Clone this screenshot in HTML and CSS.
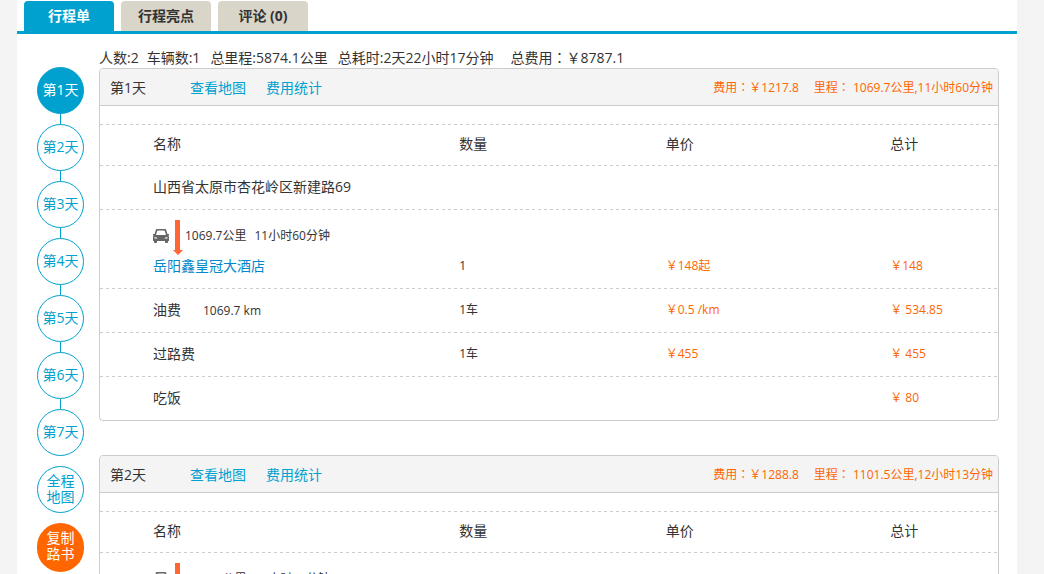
FILE: index.html
```html
<!DOCTYPE html>
<html lang="zh-CN">
<head>
<meta charset="utf-8">
<title>行程单</title>
<link rel="stylesheet" href="styles.css">
</head>
<body>
<svg class="sprite" aria-hidden="true">
  <symbol id="car" viewBox="0 0 16 14">
    <path fill="#666" fill-rule="evenodd" d="M4.500 0h7c1 0 1.600.5 1.900 1.400L14.400 5H16v1.300l-.6.3c.4.5.6 1.200.6 2V12h-1v1.200a.8.8 0 0 1-.8.800h-1.400a.8.8 0 0 1-.8-.800V12H4v1.200a.8.8 0 0 1-.8.800H1.800a.8.8 0 0 1-.8-.800V12H0V8.600c0-.8.2-1.500.6-2L0 6.300V5h1.600l1-3.600C2.900.5 3.500 0 4.500 0zM4.900 1.600c-.4 0-.6.2-.7.500L3 6h10l-1.200-3.900c-.1-.3-.3-.5-.7-.500zM1.600 8v1.500h2.600V8.800zM14.400 8l-2.600.8v.7h2.600z"/>
  </symbol>
  <symbol id="arrow" viewBox="0 0 10 36">
    <path fill="#f63" d="M2 0h5v30h3l-5 5-5-5h2z"/>
  </symbol>
</svg>
<div class="page">
  <nav class="tabs">
    <a class="tab tab-active" href="#plan">行程单</a>
    <a class="tab" href="#highlights">行程亮点</a>
    <a class="tab" href="#comments">评论 (0)</a>
  </nav>
  <div class="content" id="plan">
    <aside class="side">
      <ol class="days">
        <li><a class="dot dot-active" href="#day1">第1天</a></li>
        <li><a class="dot" href="#day2">第2天</a></li>
        <li><a class="dot" href="#day3">第3天</a></li>
        <li><a class="dot" href="#day4">第4天</a></li>
        <li><a class="dot" href="#day5">第5天</a></li>
        <li><a class="dot" href="#day6">第6天</a></li>
        <li><a class="dot" href="#day7">第7天</a></li>
      </ol>
      <a class="dot" href="#map">全程<br>地图</a>
      <button class="dot dot-copy" type="button">复制<br>路书</button>
    </aside>
    <main class="main">
      <p class="summary">
        <span class="people">人数:2</span>
        <span class="cars">车辆数:1</span>
        <span class="cars">总里程:5874.1公里</span>
        <span class="time">总耗时:2天22小时17分钟</span>
        <span>总费用<span class="colon" lang="zh-TW">：</span>￥8787.1</span>
      </p>

      <section class="day" id="day1">
        <header class="day-head">
          <h2 class="day-title">第1天</h2>
          <a class="day-link" href="#map1">查看地图</a>
          <a class="day-link" href="#cost1">费用统计</a>
          <p class="day-total">
            <span>费用<span class="colon" lang="zh-TW">：</span>￥1217.8</span>
            <span>里程<span class="colon" lang="zh-TW">：</span> 1069.7公里,11小时60分钟</span>
          </p>
        </header>
        <table class="items">
          <thead>
            <tr><th class="c-name">名称</th><th class="c-qty">数量</th><th class="c-price">单价</th><th class="c-sum">总计</th></tr>
          </thead>
          <tbody>
            <tr><td colspan="4">山西省太原市杏花岭区新建路69</td></tr>
            <tr class="stop">
              <td>
                <div class="leg">
                  <svg class="car"><use href="#car"/></svg>
                  <svg class="arrow"><use href="#arrow"/></svg>
                  <span class="leg-text"><span>1069.7公里</span><span>11小时60分钟</span></span>
                </div>
                <a class="place" href="#hotel">岳阳鑫皇冠大酒店</a>
              </td>
              <td class="num">1</td>
              <td class="money">￥148起</td>
              <td class="money">￥148</td>
            </tr>
            <tr>
              <td>油费<span class="note">1069.7 km</span></td>
              <td class="num">1车</td>
              <td class="money">￥0.5 /km</td>
              <td class="money">￥ 534.85</td>
            </tr>
            <tr>
              <td>过路费</td>
              <td class="num">1车</td>
              <td class="money">￥455</td>
              <td class="money">￥ 455</td>
            </tr>
            <tr>
              <td>吃饭</td>
              <td></td>
              <td></td>
              <td class="money">￥ 80</td>
            </tr>
          </tbody>
        </table>
      </section>

      <section class="day" id="day2">
        <header class="day-head">
          <h2 class="day-title">第2天</h2>
          <a class="day-link" href="#map2">查看地图</a>
          <a class="day-link" href="#cost2">费用统计</a>
          <p class="day-total">
            <span>费用<span class="colon" lang="zh-TW">：</span>￥1288.8</span>
            <span>里程<span class="colon" lang="zh-TW">：</span> 1101.5公里,12小时13分钟</span>
          </p>
        </header>
        <table class="items">
          <thead>
            <tr><th class="c-name">名称</th><th class="c-qty">数量</th><th class="c-price">单价</th><th class="c-sum">总计</th></tr>
          </thead>
          <tbody>
            <tr class="stop">
              <td colspan="4">
                <div class="leg">
                  <svg class="car"><use href="#car"/></svg>
                  <svg class="arrow"><use href="#arrow"/></svg>
                  <span class="leg-text"><span>1101.5公里</span><span>12小时13分钟</span></span>
                </div>
              </td>
            </tr>
          </tbody>
        </table>
      </section>
    </main>
  </div>
</div>
</body>
</html>
```

FILE: styles.css
```css
* {
  box-sizing: border-box;
}

body {
  margin: 0;
  padding: 0 27px 0 17px;
  background: #f4f4f4;
  color: #333;
  font: 14px/20px "Open Sans", "Noto Sans CJK SC", sans-serif;
  text-spacing-trim: space-all;
}

a {
  color: #00a1cf;
  text-decoration: none;
}

h2,
p,
ol {
  margin: 0;
  padding: 0;
  font-size: 14px;
  font-weight: 400;
}

.sprite {
  display: none;
}

.colon {
  font-family: "Noto Sans CJK TC", sans-serif;
  line-height: 1;
}

.page {
  min-height: 100vh;
  background: #fff;
}

/* Tabs */
.tabs {
  display: flex;
  gap: 7px;
  padding: 1px 7px 0;
  border-bottom: 3px solid #00a1cf;
}

.tab {
  width: 90px;
  height: 30px;
  border-radius: 4px 4px 0 0;
  background: #d9d5c9;
  color: #333;
  font-weight: 700;
  line-height: 30px;
  text-align: center;
}

.tab-active {
  background: #00a1cf;
  color: #fff;
}

.content {
  display: flex;
  gap: 15px;
  padding: 0 18px 0 20px;
}

/* Day navigation */
.side {
  display: flex;
  flex: none;
  flex-direction: column;
  gap: 10px;
  padding-top: 33px;
}

.days {
  list-style: none;
}

.days li + li::before {
  content: "";
  display: block;
  width: 1px;
  height: 10px;
  margin: 0 auto;
  background: #00a1cf;
}

.dot {
  display: flex;
  align-items: center;
  justify-content: center;
  width: 47px;
  height: 47px;
  padding: 0 0 2px;
  border: 1px solid #00a1cf;
  border-radius: 50%;
  background: #fff;
  font: inherit;
  line-height: 16px;
  text-align: center;
}

.dot-active {
  background: #00a1cf;
  color: #fff;
}

.dot-copy {
  height: 49px;
  padding: 0 0 4px;
  border: 0;
  border-radius: 24px;
  background: #f60;
  color: #fff;
}

/* Day panels */
.main {
  flex: 1;
  min-width: 0;
  padding-top: 14px;
}

.summary {
  display: flex;
  align-items: baseline;
  height: 20px;
}

.people {
  margin-right: 8px;
}

.cars {
  margin-right: 10px;
}

.time {
  margin-right: 17px;
}

.day {
  margin-bottom: 34px;
  border: 1px solid #ccc;
  border-radius: 4px;
}

.day-head {
  display: flex;
  align-items: center;
  height: 37px;
  padding: 2px 5px 0 10px;
  border-bottom: 1px solid #ccc;
  border-radius: 3px 3px 0 0;
  background: #f4f4f4;
}

.day-title {
  width: 80px;
}

.day-link {
  margin-right: 20px;
}

.day-total {
  display: flex;
  gap: 15px;
  margin-left: auto;
  color: #f60;
  font-size: 12px;
}

.items {
  width: 100%;
  margin-top: 18px;
  border-spacing: 0;
  table-layout: fixed;
}

.items tr {
  background: repeating-linear-gradient(90deg, #ccc 0 3px, transparent 3px 6px) 0 0 / 100% 1px no-repeat;
}

.items th {
  padding: 10px 0 11px;
  font-weight: 400;
  text-align: left;
}

.items td {
  height: 44px;
  padding: 12px 0;
  vertical-align: bottom;
}

.items .stop td {
  padding-top: 11px;
}

.items th:first-child,
.items td:first-child {
  padding-left: 53px;
}

.c-name {
  width: 40%;
}

.c-qty {
  width: 23%;
}

.c-price {
  width: 25%;
}

.c-sum {
  width: 12%;
}

.num,
.money,
.note,
.leg-text {
  font-size: 12px;
}

.money {
  color: #f60;
}

.note {
  margin-left: 22px;
  line-height: 1;
}

.leg {
  display: flex;
  align-items: center;
  height: 36px;
}

.car {
  width: 16px;
  height: 14px;
  margin: 0 4px 4px 0;
}

.arrow {
  width: 10px;
  height: 36px;
  margin-right: 2px;
}

.leg-text {
  display: flex;
  gap: 8px;
  padding-bottom: 4px;
}

.place {
  display: block;
  color: #0088cc;
}
```
